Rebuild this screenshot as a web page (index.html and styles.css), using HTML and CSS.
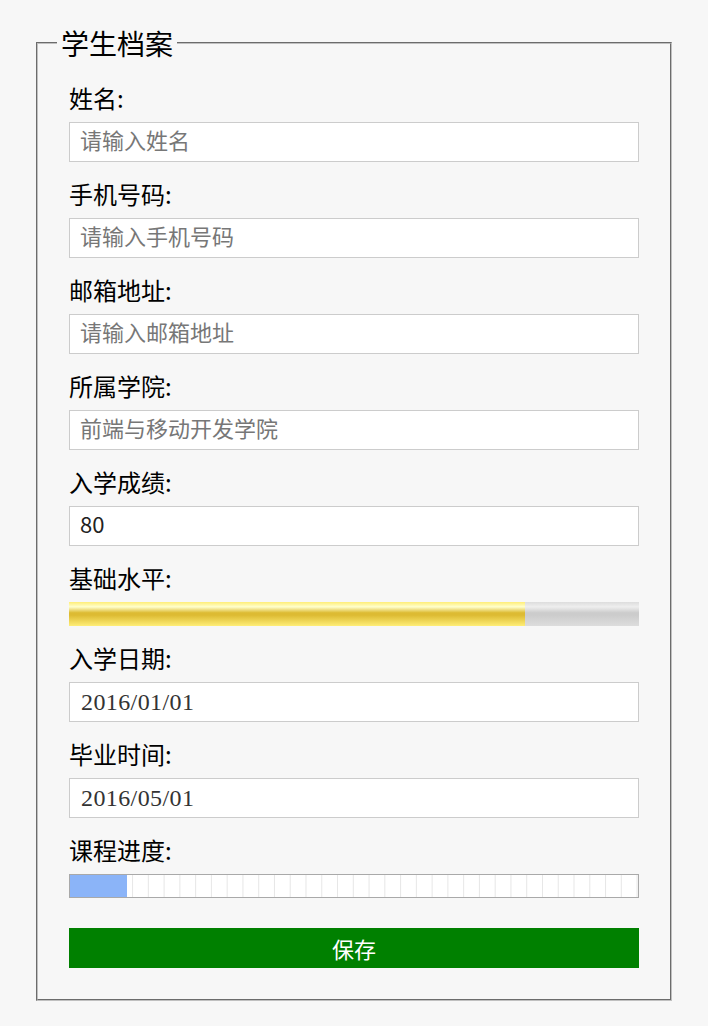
FILE: index.html
```html
<!DOCTYPE html>
<html lang="zh-CN">
<head>
<meta charset="utf-8">
<title>学生档案</title>
<link rel="stylesheet" href="styles.css">
</head>
<body>
<div class="page">
  <form class="card">
    <fieldset class="box">
      <legend class="title">学生档案</legend>
      <div class="field">
        <label class="label" for="name">姓名:</label>
        <input class="input" id="name" type="text" placeholder="请输入姓名">
      </div>
      <div class="field">
        <label class="label" for="phone">手机号码:</label>
        <input class="input" id="phone" type="text" placeholder="请输入手机号码">
      </div>
      <div class="field">
        <label class="label" for="mail">邮箱地址:</label>
        <input class="input" id="mail" type="text" placeholder="请输入邮箱地址">
      </div>
      <div class="field">
        <label class="label" for="college">所属学院:</label>
        <input class="input" id="college" type="text" placeholder="前端与移动开发学院">
      </div>
      <div class="field">
        <label class="label" for="score">入学成绩:</label>
        <input class="input input-value" id="score" type="text" value="80">
      </div>
      <div class="field">
        <div class="label">基础水平:</div>
        <div class="meter" role="meter" aria-valuemin="0" aria-valuemax="100" aria-valuenow="80">
          <div class="meter-fill" style="width: 80%"></div>
        </div>
      </div>
      <div class="field">
        <label class="label" for="start">入学日期:</label>
        <input class="input input-date" id="start" type="text" value="2016/01/01">
      </div>
      <div class="field">
        <label class="label" for="end">毕业时间:</label>
        <input class="input input-date" id="end" type="text" value="2016/05/01">
      </div>
      <div class="field">
        <div class="label">课程进度:</div>
        <div class="progress" role="progressbar" aria-valuemin="0" aria-valuemax="100" aria-valuenow="10">
          <div class="progress-fill" style="width: 10%"></div>
        </div>
      </div>
      <button class="save" type="button">保存</button>
    </fieldset>
  </form>
</div>
</body>
</html>
```

FILE: styles.css
```css
html, body {
  margin: 0;
  padding: 0;
  background: #f7f7f7;
}

body {
  font-family: "Noto Sans CJK SC", "Noto Sans", sans-serif;
  color: #000;
}

.page {
  padding: 25px 36px 25px;
}

.card {
  margin: 0;
}

.box {
  margin: 0;
  padding: 5px 31px 31px;
  border: 2px groove #c0c0c0;
  min-width: 0;
}

.title {
  font-size: 28px;
  line-height: 36px;
  padding: 0 4px;
  margin-left: -12px;
}

.field {
  margin-top: 16px;
}

.label {
  display: block;
  font-size: 24px;
  line-height: 32px;
  margin-bottom: 8px;
}

.input {
  display: block;
  box-sizing: border-box;
  width: 100%;
  height: 40px;
  margin: 0;
  padding: 0 10px 6px;
  border: 1px solid #cccccc;
  background: #fff;
  font-family: "Noto Sans CJK SC", "Noto Sans", sans-serif;
  font-size: 22px;
  color: #222;
  outline: none;
}

.input::placeholder {
  color: #777;
  opacity: 1;
}

.input-date {
  font-family: "Liberation Serif", "Noto Sans CJK SC", serif;
  font-size: 24px;
  letter-spacing: 0.4px;
  color: #333;
  padding: 0 10px 0 11px;
}

.meter {
  height: 24px;
  background: linear-gradient(to bottom, #dddddd, #eeeeee 20%, #cccccc 45%, #cccccc 55%, #dddddd);
}

.meter-fill {
  height: 100%;
  background: linear-gradient(to bottom, #ffee77, #ffffcc 20%, #ddbb33 45%, #ddbb33 55%, #ffee77);
}

.progress {
  box-sizing: border-box;
  height: 24px;
  border: 1px solid #a9a9a9;
  background-color: #fff;
  background-image: linear-gradient(to right, transparent calc(100% - 1px), #e6e6e6 0);
  background-size: calc(100% / 36) 100%;
}

.progress-fill {
  height: 100%;
  background: #8bb4f8;
}

.save {
  display: block;
  box-sizing: border-box;
  width: 100%;
  height: 40px;
  margin-top: 30px;
  border: 0;
  padding: 0;
  background: #008000;
  color: #fff;
  font-family: "Noto Sans CJK SC", "Noto Sans", sans-serif;
  font-size: 22px;
}
```
